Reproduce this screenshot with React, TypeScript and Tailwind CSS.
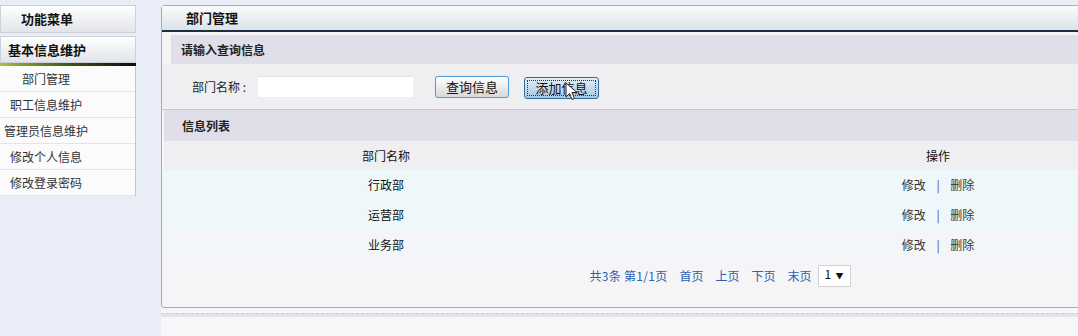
const font = { fontFamily: '"Noto Sans CJK SC", "Liberation Sans", sans-serif' };

const menuItems = ["部门管理", "职工信息维护", "管理员信息维护", "修改个人信息", "修改登录密码"];
const depts = ["行政部", "运营部", "业务部"];

function Sidebar() {
  return (
    <div className="w-[136px] shrink-0 pt-[5px] flex flex-col">
      <div className="h-[28px] border border-[#cdd0d8] bg-gradient-to-b from-white to-[#e2e4ea] flex items-center">
        <span className="w-[92px] text-center text-[13px] font-bold text-[#111]">功能菜单</span>
      </div>
      <div className="h-[27px] mt-[3px] border border-[#cdd0d8] bg-gradient-to-b from-white to-[#e2e4ea] flex items-center">
        <span className="w-[92px] text-center text-[13px] font-bold text-[#111]">基本信息维护</span>
      </div>
      <div className="h-[3px] bg-gradient-to-r from-[#a4c43c] via-[#3d5a12] to-[#0c0c0c]" />
      <div className="bg-[#fbfbfc] border-r border-[#c4c6cc]">
        {menuItems.map((m) => (
          <div key={m} className="h-[26px] border-b border-[#e4e4e8] flex items-center">
            <span className="w-[92px] text-center text-[12px] text-[#333]">{m}</span>
          </div>
        ))}
      </div>
    </div>
  );
}

function Cursor() {
  return (
    <svg className="absolute left-[41px] top-[8px]" width="14" height="20" viewBox="0 0 14 20">
      <path d="M1 1 L1 15 L4.5 11.5 L7 17.5 L9.5 16.5 L7 10.5 L12 10.5 Z" fill="#fff" stroke="#222" strokeWidth="1" />
    </svg>
  );
}

function Panel() {
  return (
    <div className="w-[1108px] border border-[#a8aab4] rounded-[3px] bg-[#f5f5f8] pb-[16px]">
      <div className="h-[26px] bg-gradient-to-b from-[#fbfbfc] to-[#dce3e6] border-b-2 border-[#1c2e40] flex items-center pl-[24px]">
        <span className="text-[13px] font-bold text-[#111]">部门管理</span>
      </div>
      <div className="h-[29px] mt-[3px] ml-[9px] bg-[#e0dfe9] flex items-center pl-[10px]">
        <span className="text-[12px] font-bold text-[#222]">请输入查询信息</span>
      </div>
      <div className="h-[46px] bg-[#efeff2] border-b border-[#c9c9cf] flex items-center pl-[30px]">
        <span className="text-[12px] text-[#222] w-[66px]">部门名称 :</span>
        <div className="w-[155px] h-[21px] bg-white border-t border-[#e4e4e8]" />
        <button className="ml-[22px] w-[74px] h-[22px] rounded-[3px] border border-[#4aa0e0] bg-gradient-to-b from-white to-[#d8d8d8] text-[13px] text-[#111] shadow-[0_0_1px_#7cc0f0]">
          查询信息
        </button>
        <div className="relative ml-[15px]">
          <button className="w-[75px] h-[22px] rounded-[3px] border border-[#2f6c9e] bg-gradient-to-b from-[#e2eef8] to-[#a9c7e3] text-[13px] text-[#111] p-[2px]">
            <span className="flex h-full items-center justify-center border border-dotted border-[#333]">添加信息</span>
          </button>
          <Cursor />
        </div>
      </div>
      <div className="h-[31px] ml-[2px] bg-[#e0dfe9] flex items-center pl-[18px]">
        <span className="text-[12px] font-bold text-[#222]">信息列表</span>
      </div>
      <div className="ml-[2px]">
        <div className="h-[29px] bg-[#efeef1] grid grid-cols-[444px_1fr] items-center text-[12px] text-[#111]">
          <span className="text-center">部门名称</span>
          <span className="text-center">操作</span>
        </div>
        {depts.map((d, i) => (
          <div
            key={d}
            className={`h-[30px] grid grid-cols-[444px_1fr] items-center text-[12px] text-[#111] ${i < 2 ? "bg-[#eef8fa]" : "bg-[#f3f6f8]"}`}
          >
            <span className="text-center">{d}</span>
            <span className="text-center text-[#333]">
              修改 <span className="mx-[8px] text-[#555]">|</span> 删除
            </span>
          </div>
        ))}
        <div className="h-[31px] flex items-center justify-center text-[12px] text-[#2c5fb3] gap-[12px] pl-[8px]">
          <span className="tracking-[0.3px]">共3条 第1/1页</span>
          <span>首页</span>
          <span>上页</span>
          <span>下页</span>
          <span className="-mr-[6px]">末页</span>
          <div className="w-[33px] h-[22px] border border-[#d2d2d6] bg-white flex items-center justify-between px-[6px] text-[#111]">
            <span className="-mt-[4px]">1</span>
            <span className="text-[8px]">▼</span>
          </div>
        </div>
      </div>
    </div>
  );
}

export default function App() {
  return (
    <div className="w-[1078px] h-[336px] overflow-hidden bg-[#e9edf7] flex" style={font}>
      <Sidebar />
      <div className="ml-[25px] flex flex-col">
        <div className="h-[5px] bg-[#e9edf7]" />
        <div className="flex flex-col bg-[#f7f6f9] grow">
          <Panel />
          <div className="mt-[5px] h-[4px] bg-[#e3e3ea] border-t border-dashed border-[#cfcfd8]" />
        </div>
      </div>
    </div>
  );
}
